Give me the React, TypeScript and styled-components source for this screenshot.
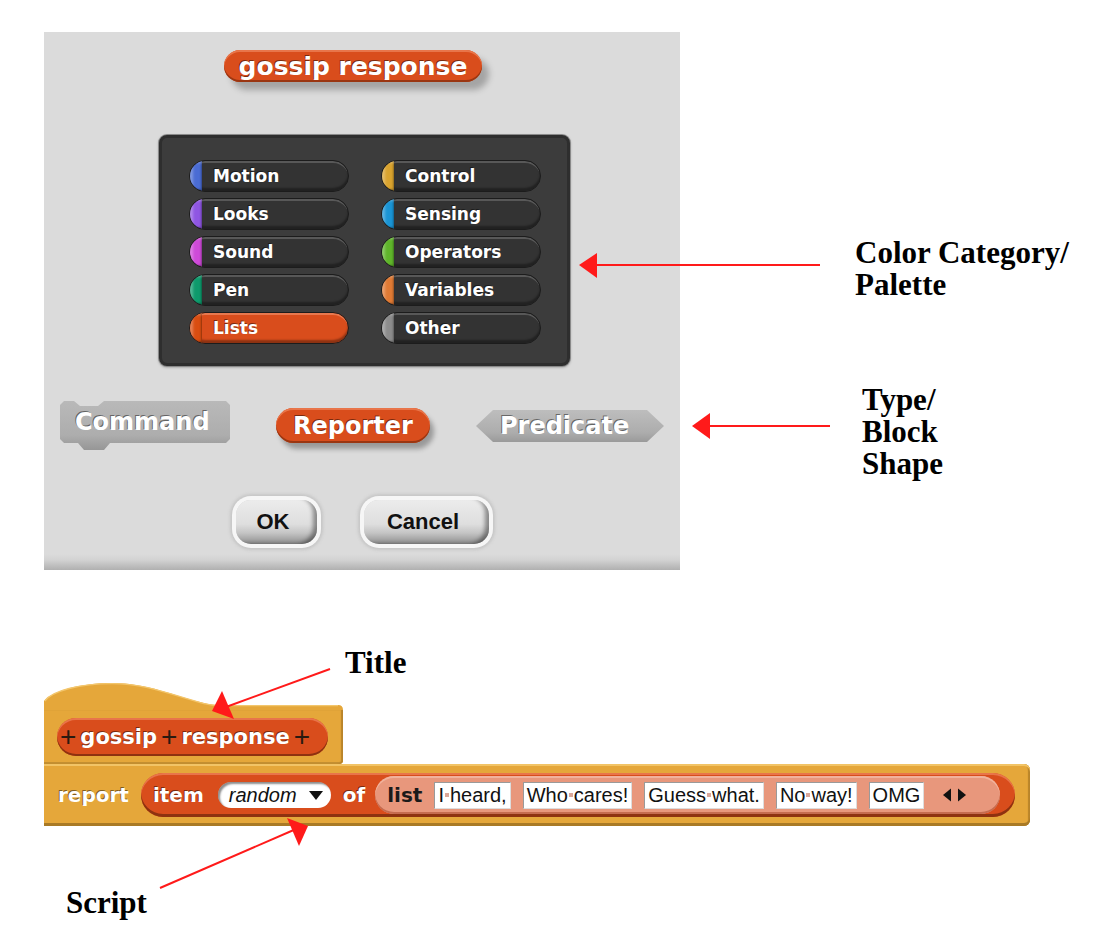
import styled, { createGlobalStyle } from 'styled-components'

const BLOCK_FONT = `'DejaVu Sans', 'Liberation Sans', sans-serif`
const UI_FONT = `'Liberation Sans', Arial, sans-serif`
const NOTE_FONT = `'Liberation Serif', 'Times New Roman', serif`

const CONTROL = '#e5a73a'
const LISTS = '#d94d1c'
const ZEBRA = '#e8977c'
const SHAPE_GRAY = '#adadad'

const categories = [
  { name: 'Motion', color: '#4a6cd4' },
  { name: 'Looks', color: '#8f56e3' },
  { name: 'Sound', color: '#cf4ad9' },
  { name: 'Pen', color: '#0e9a6c' },
  { name: 'Lists', color: '#d94d11', active: true },
  { name: 'Control', color: '#d9a32e' },
  { name: 'Sensing', color: '#1a94d4' },
  { name: 'Operators', color: '#5fb52a' },
  { name: 'Variables', color: '#e07a34' },
  { name: 'Other', color: '#8c8c8c' }
]

const slots = ['I heard,', 'Who cares!', 'Guess what.', 'No way!', 'OMG']

const App = () => {
  return (
    <Page>
      <GlobalStyle />
      <TopRow>
        <Dialog>
          <DialogTitle>gossip response</DialogTitle>
          <Palette>
            {categories.map((c) => (
              <CatItem key={c.name} $active={c.active}>
                <CatCap $color={c.color} />
                {c.name}
              </CatItem>
            ))}
          </Palette>
          <ShapeRow>
            <CommandShape>Command</CommandShape>
            <ReporterShape>Reporter</ReporterShape>
            <PredicateShape>Predicate</PredicateShape>
          </ShapeRow>
          <ButtonRow>
            <DialogButton $w={81}>OK</DialogButton>
            <DialogButton $w={125}>Cancel</DialogButton>
          </ButtonRow>
        </Dialog>
        <NoteColumn>
          <Note $top={205}>
            Color Category/
            <br />
            Palette
          </Note>
          <Note $top={83} $left={7}>
            Type/
            <br />
            Block
            <br />
            Shape
          </Note>
        </NoteColumn>
      </TopRow>

      <Note $top={77} $left={301}>
        Title
      </Note>

      <Script>
        <HatCap width="299" height="28" viewBox="0 0 299 28">
          <path
            d="M0,28 L0,19 C8,9 36,1 68,1 C104,1 130,14 160,21 C166,22.5 170,23 176,23 L294,23 Q299,23 299,28 Z"
            fill={CONTROL}
          />
          <path
            d="M0.8,19 C8,9 36,1.6 68,1.6 C104,1.6 130,14 160,21.6 C166,23 170,23.6 176,23.6 L294,23.6"
            fill="none"
            stroke="#f3c66c"
            strokeWidth="1.4"
          />
        </HatCap>
        <HatBody>
          <HatTitle>
            <Plus>+</Plus>gossip<Plus>+</Plus>response<Plus>+</Plus>
          </HatTitle>
        </HatBody>
        <CommandBlock>
          <BlockLabel>report</BlockLabel>
          <ItemReporter>
            <BlockLabel>item</BlockLabel>
            <Dropdown>
              random
              <svg width="14" height="9" viewBox="0 0 14 9">
                <path d="M0,0 L14,0 L7,9 Z" fill="#111" />
              </svg>
            </Dropdown>
            <BlockLabel>of</BlockLabel>
            <ListReporter>
              <DarkLabel>list</DarkLabel>
              {slots.map((s) => (
                <Slot key={s}>
                  {s.split(' ').map((w, i) => (
                    <span key={i}>
                      {i > 0 && <SpaceDot />}
                      {w}
                    </span>
                  ))}
                </Slot>
              ))}
              <ArrowsIcon width="28" height="14" viewBox="0 0 28 14">
                <path d="M2,7 L10,0.5 L10,13.5 Z" fill="#111" />
                <path d="M17,0.5 L25,7 L17,13.5 Z" fill="#111" />
              </ArrowsIcon>
            </ListReporter>
          </ItemReporter>
        </CommandBlock>
      </Script>

      <Note $top={61} $left={22}>
        Script
      </Note>

      <Arrows width="1112" height="950" viewBox="0 0 1112 950">
        <g stroke="#ff1a1a" strokeWidth="2" fill="none">
          <line x1="820" y1="265" x2="594" y2="265" />
          <line x1="830" y1="426" x2="708" y2="426" />
          <line x1="330" y1="669" x2="226" y2="707" />
          <line x1="160" y1="888" x2="296" y2="829" />
        </g>
        <g fill="#ff1a1a">
          <path d="M579,265 L597,253 L597,278 Z" />
          <path d="M692,426 L710,413 L710,439 Z" />
          <path d="M222,691 L212,711 L234,719 Z" />
          <path d="M287,818 L308,826 L299,846 Z" />
        </g>
      </Arrows>
    </Page>
  )
}

export default App

const GlobalStyle = createGlobalStyle`
  html, body {
    margin: 0;
    padding: 0;
    background: #fff;
  }
  body {
    font-family: ${UI_FONT};
  }
`

const Page = styled.div`
  position: relative;
  width: 1112px;
  height: 950px;
  box-sizing: border-box;
  padding: 32px 0 0 44px;
  overflow: hidden;
`

const TopRow = styled.div`
  display: flex;
  align-items: flex-start;
`

const Dialog = styled.div`
  width: 636px;
  height: 538px;
  box-sizing: border-box;
  padding: 18px 16px 0;
  display: flex;
  flex-direction: column;
  align-items: center;
  background: linear-gradient(to bottom, #dbdbdb 0, #dbdbdb calc(100% - 16px), #d2d2d2 calc(100% - 10px), #b0b0b0 100%);
`

const whiteText = `
  color: #fff;
  font-family: ${BLOCK_FONT};
  font-weight: bold;
  text-shadow: -1px -1px 0 rgba(0, 0, 0, 0.45);
`

const DialogTitle = styled.div`
  height: 32px;
  box-sizing: border-box;
  padding: 0 15px;
  margin-right: 18px;
  display: flex;
  align-items: center;
  border-radius: 16px;
  background: ${LISTS};
  box-shadow: inset 0 2px 0 #e8754a, inset 0 -2px 0 #9a3612, 7px 8px 6px rgba(0, 0, 0, 0.25);
  font-size: 25px;
  line-height: 1;
  ${whiteText}
`

const Palette = styled.div`
  margin-top: 53px;
  margin-left: 5px;
  width: 411px;
  height: 231px;
  box-sizing: border-box;
  padding: 22px 27px;
  display: grid;
  grid-template-columns: 160px 160px;
  grid-template-rows: repeat(5, 32px);
  grid-auto-flow: column;
  column-gap: 32px;
  row-gap: 6px;
  background: #3c3c3c;
  border: 3px solid #2e2e2e;
  border-radius: 8px;
  box-shadow: 0 0 0 1px #8a8a8a, 0 1px 3px rgba(0, 0, 0, 0.4);
`

const CatItem = styled.div<{ $active?: boolean }>`
  display: flex;
  align-items: center;
  height: 32px;
  box-sizing: border-box;
  border-radius: 16px;
  border: 1px solid #1c1c1c;
  overflow: hidden;
  background: ${(p) => (p.$active ? LISTS : '#333333')};
  box-shadow: inset 0 3px 0 -1px ${(p) => (p.$active ? '#e8784e' : '#585858')},
    inset 0 -3px 2px rgba(0, 0, 0, 0.35);
  font-size: 17px;
  ${whiteText}
`

const CatCap = styled.span<{ $color: string }>`
  flex: none;
  align-self: stretch;
  width: 12px;
  margin-right: 11px;
  background: ${(p) => p.$color};
  box-shadow: inset 3px 2px 3px rgba(255, 255, 255, 0.3), inset -1px -2px 2px rgba(0, 0, 0, 0.35);
`

const ShapeRow = styled.div`
  margin-top: 35px;
  width: 100%;
  height: 50px;
  display: flex;
  justify-content: space-between;
  align-items: flex-start;
`

const CommandShape = styled.div`
  width: 170px;
  height: 49px;
  box-sizing: border-box;
  padding: 0 0 7px 15px;
  display: flex;
  align-items: center;
  background: linear-gradient(to bottom, #b9b9b9 0, ${SHAPE_GRAY} 70%, #969696 100%);
  clip-path: polygon(
    0 4px, 4px 0, 14px 0, 20px 5px, 38px 5px, 44px 0, 166px 0, 170px 4px,
    170px 38px, 166px 42px, 50px 42px, 44px 49px, 24px 49px, 18px 42px, 4px 42px, 0 38px
  );
  font-size: 24px;
  line-height: 1;
  ${whiteText}
`

const ReporterShape = styled.div`
  margin-top: 7px;
  height: 35px;
  box-sizing: border-box;
  padding: 0 17px;
  display: flex;
  align-items: center;
  border-radius: 18px;
  background: ${LISTS};
  box-shadow: inset 0 2px 0 #e8754a, inset 0 -2px 0 #9a3612, 4px 6px 5px rgba(0, 0, 0, 0.3);
  font-size: 24px;
  line-height: 1;
  ${whiteText}
`

const PredicateShape = styled.div`
  margin-top: 9px;
  width: 188px;
  height: 32px;
  box-sizing: border-box;
  padding-left: 24px;
  display: flex;
  align-items: center;
  background: linear-gradient(to bottom, #bdbdbd 0, ${SHAPE_GRAY} 70%, #9a9a9a 100%);
  clip-path: polygon(17px 0, 171px 0, 188px 16px, 171px 32px, 17px 32px, 0 16px);
  font-size: 24px;
  line-height: 1;
  ${whiteText}
`

const ButtonRow = styled.div`
  margin-top: 49px;
  display: flex;
  gap: 47px;
`

const DialogButton = styled.div<{ $w: number }>`
  width: ${(p) => p.$w}px;
  height: 44px;
  box-sizing: border-box;
  padding-right: 6px;
  display: flex;
  align-items: center;
  justify-content: center;
  border-radius: 15px;
  background: linear-gradient(to bottom, #ececec 0, #dedede 55%, #c4c4c4 75%, #8e8e8e 100%);
  box-shadow: inset -6px -2px 4px -2px rgba(0, 0, 0, 0.4), 0 0 0 4px #f6f6f6, 0 0 3px 6px rgba(190, 190, 190, 0.7);
  font-family: ${UI_FONT};
  font-weight: bold;
  font-size: 22px;
  color: #111;
`

const NoteColumn = styled.div`
  margin-left: 175px;
  display: flex;
  flex-direction: column;
  align-items: flex-start;
`

const Note = styled.div<{ $top: number; $left?: number }>`
  margin-top: ${(p) => p.$top}px;
  margin-left: ${(p) => p.$left ?? 0}px;
  font-family: ${NOTE_FONT};
  font-weight: bold;
  font-size: 31px;
  line-height: 32px;
  color: #000;
`

const Script = styled.div`
  margin-top: 3px;
  display: flex;
  flex-direction: column;
  align-items: flex-start;
`

const HatCap = styled.svg`
  display: block;
`

const HatBody = styled.div`
  width: 299px;
  box-sizing: border-box;
  padding: 8px 0 8px 13px;
  background: ${CONTROL};
  border-radius: 0 0 4px 0;
  box-shadow: inset -2px 0 1px #b9842a, inset 0 -2px 0 #c48f31;
`

const HatTitle = styled.div`
  width: 271px;
  height: 38px;
  box-sizing: border-box;
  padding: 0 0 0 3px;
  display: flex;
  align-items: center;
  gap: 4px;
  border-radius: 19px;
  background: ${LISTS};
  box-shadow: inset 0 2px 0 #e8754a, inset 0 -2px 0 #8e3210;
  font-size: 21px;
  line-height: 1;
  ${whiteText}
`

const Plus = styled.span`
  font-family: ${UI_FONT};
  font-weight: normal;
  font-size: 28px;
  color: #2a1a10;
  text-shadow: none;
`

const CommandBlock = styled.div`
  width: 986px;
  height: 62px;
  box-sizing: border-box;
  padding: 0 15px 0 14px;
  display: flex;
  align-items: center;
  gap: 12px;
  background: ${CONTROL};
  border-radius: 0 6px 6px 0;
  box-shadow: inset 0 2px 0 #f2c466, inset 0 -3px 0 #a97a25, inset -2px 0 1px #b9842a;
`

const BlockLabel = styled.span`
  font-size: 20px;
  line-height: 1;
  ${whiteText}
`

const ItemReporter = styled.div`
  flex: 1;
  height: 44px;
  box-sizing: border-box;
  padding: 0 15px 0 12px;
  display: flex;
  align-items: center;
  border-radius: 22px;
  background: ${LISTS};
  box-shadow: inset 0 2px 0 #e8754a, inset 0 -3px 0 #8e3210;

  & > ${BlockLabel}:first-child {
    margin-right: 14px;
  }
  & > ${BlockLabel}:nth-child(3) {
    margin: 0 10px 0 12px;
  }
`

const Dropdown = styled.span`
  width: 113px;
  height: 26px;
  box-sizing: border-box;
  padding: 0 8px 0 11px;
  display: flex;
  align-items: center;
  justify-content: space-between;
  border-radius: 13px;
  background: #fff;
  box-shadow: inset 2px 2px 2px rgba(0, 0, 0, 0.45);
  font-family: ${UI_FONT};
  font-style: italic;
  font-size: 20px;
  color: #111;
`

const ListReporter = styled.div`
  flex: 1;
  height: 38px;
  box-sizing: border-box;
  padding: 0 5px 0 12px;
  display: flex;
  align-items: center;
  gap: 12px;
  border-radius: 19px;
  background: ${ZEBRA};
  box-shadow: inset 0 2px 0 #f1b29c, inset 0 -2px 0 #c56b4f;
`

const DarkLabel = styled.span`
  font-family: ${BLOCK_FONT};
  font-weight: bold;
  font-size: 20px;
  line-height: 1;
  color: #1a1a1a;
`

const Slot = styled.span`
  height: 27px;
  box-sizing: border-box;
  padding: 0 3px;
  display: flex;
  align-items: center;
  background: #fff;
  border: 1px solid #9a9a9a;
  border-right-color: #ddd;
  border-bottom-color: #ddd;
  font-family: ${UI_FONT};
  font-size: 20px;
  color: #111;
  white-space: nowrap;
`

const SpaceDot = styled.span`
  display: inline-block;
  width: 4px;
  height: 4px;
  margin: 0 1px 3px;
  vertical-align: middle;
  background: #d9a79a;
`

const ArrowsIcon = styled.svg`
  margin-left: 5px;
  flex: none;
`

const Arrows = styled.svg`
  position: absolute;
  top: 0;
  left: 0;
  pointer-events: none;
`
